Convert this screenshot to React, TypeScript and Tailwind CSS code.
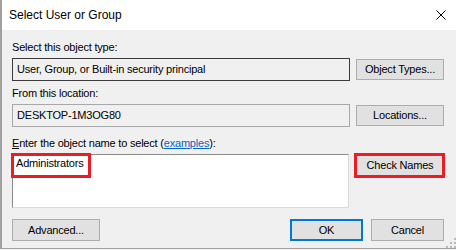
import React from 'react';

const btn =
  'h-[21px] w-[88px] border border-[#adadad] bg-[#e1e1e1] flex items-center justify-center text-black';

function ResizeGrip() {
  const dots = [
    [8, 0],
    [4, 4],
    [8, 4],
    [0, 8],
    [4, 8],
    [8, 8],
  ];
  return (
    <svg width="10" height="10" viewBox="0 0 10 10" className="absolute right-0 bottom-[0px]">
      {dots.map(([x, y]) => (
        <rect key={`${x}-${y}`} x={x} y={y} width="2" height="2" fill="#b8b8b8" />
      ))}
    </svg>
  );
}

export default function App() {
  return (
    <div className="w-[456px] h-[250px] bg-[#f0f0f0] text-black font-['Liberation_Sans',Arial,sans-serif] overflow-hidden">
      <div className="relative h-[249px] border-l-2 border-b border-[#a0a0a0] flex flex-col">
        {/* title bar */}
        <div className="h-[30px] shrink-0 bg-white flex items-center justify-between pl-[7px] pr-[10px]">
          <span className="text-[12px] leading-[14px]">Select User or Group</span>
          <svg width="10" height="10" viewBox="0 0 10 10" className="mt-[-1px]">
            <path d="M0.5 0.5 L9.5 9.5 M9.5 0.5 L0.5 9.5" stroke="#000" strokeWidth="1" />
          </svg>
        </div>

        <div className="flex flex-col pl-[10px] pr-[12px] text-[11px] leading-[13px] tracking-[-0.2px]">
          <div className="mt-[11px]">Select this object type:</div>
          <div className="mt-[4px] flex items-center">
            <div className="w-[338px] h-[23px] border border-[#3c3c3c] flex items-center px-[4px]">
              User, Group, or Built-in security principal
            </div>
            <button className={`ml-[6px] ${btn}`}>Object Types...</button>
          </div>

          <div className="mt-[6px]">From this location:</div>
          <div className="mt-[4px] flex items-center">
            <div className="w-[338px] h-[23px] border border-[#a8a8a8] flex items-center px-[4px]">
              DESKTOP-1M3OG80
            </div>
            <button className={`ml-[6px] ${btn}`}>Locations...</button>
          </div>

          <div className="mt-[10px]">
            <span className="underline">E</span>nter the object name to select (
            <span className="text-[#0066cc] underline">examples</span>):
          </div>
          <div className="mt-[4px] flex items-start">
            <div className="relative w-[337px] h-[54px] bg-white border border-t-[#8a8a8a] border-l-[#8a8a8a] border-r-[#dadada] border-b-[#dadada] pl-[3px] pt-[2px]">
              Administrators
              <div className="absolute -left-[2px] -top-[2px] w-[80px] h-[25px] border-[3px] border-[#ed1c24]" />
            </div>
            <div className="relative ml-[7px]">
              <button className={`${btn} h-[22px]`}>Check Names</button>
              <div className="absolute -left-[2px] -top-[1px] w-[91px] h-[25px] border-[3px] border-[#ed1c24]" />
            </div>
          </div>

          <div className="mt-[11px] flex items-center justify-between">
            <button className={`${btn} h-[22px]`}>Advanced...</button>
            <div className="flex gap-[8px]">
              <button className="h-[22px] w-[73px] border-2 border-[#0078d7] bg-[#e1e1e1] flex items-center justify-center">
                OK
              </button>
              <button className="h-[22px] w-[73px] border border-[#adadad] bg-[#e1e1e1] flex items-center justify-center">
                Cancel
              </button>
            </div>
          </div>
        </div>
        <ResizeGrip />
      </div>
    </div>
  );
}
